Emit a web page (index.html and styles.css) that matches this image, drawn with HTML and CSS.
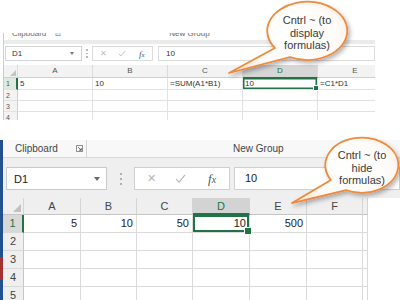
FILE: index.html
```html
<!DOCTYPE html>
<html>
<head>
<meta charset="utf-8">
<link rel="stylesheet" href="styles.css">
</head>
<body>
<div class="page">
  <section class="shot s1">
    <div class="ribbon">
      <span class="glabel clip">Clipboard</span><span class="launch">⊡</span>
      <span class="glabel newg">New Group</span>
    </div>
    <div class="band"></div>
    <div class="fbar">
      <div class="namebox"><span>D1</span><span class="arrow"></span></div>
      <div class="dots"><i></i><i></i><i></i></div>
      <div class="fbtns">
        <span class="xbtn">✕</span>
        <svg class="chk" viewBox="0 0 10 8"><polyline points="1,4.5 3.8,7 9,1" fill="none" stroke="#b5b5b5" stroke-width="1"/></svg>
        <span class="fx">f<small>x</small></span>
      </div>
      <div class="finput">10</div>
    </div>
    <div class="sheet">
      <div class="hd corner"><span class="tri"></span></div>
      <div class="hd">A</div><div class="hd">B</div><div class="hd">C</div><div class="hd sel">D</div><div class="hd">E</div>
      <div class="rh selr">1</div><div class="c">5</div><div class="c">10</div><div class="c">=SUM(A1*B1)</div><div class="c active">10</div><div class="c">=C1*D1</div>
      <div class="rh">2</div><div class="c"></div><div class="c"></div><div class="c"></div><div class="c"></div><div class="c"></div>
      <div class="rh">3</div><div class="c"></div><div class="c"></div><div class="c"></div><div class="c"></div><div class="c"></div>
      <div class="rh">4</div><div class="c"></div><div class="c"></div><div class="c"></div><div class="c"></div><div class="c"></div>
    </div>
  </section>

  <section class="shot s2">
    <div class="edge"></div>
    <div class="main">
      <div class="ribbon">
        <div class="grp gclip"><span class="glabel">Clipboard</span><span class="launch">
          <svg viewBox="0 0 8 8"><path d="M0.5 0.5H7.5V7.5H0.5Z" fill="none" stroke="#777" stroke-width="1"/><path d="M2.5 2.5L6 6M6 3.5V6H3.5" fill="none" stroke="#555" stroke-width="1"/></svg></span></div>
        <div class="grp gnew"><span class="glabel">New Group</span></div>
      </div>
      <div class="fbar">
        <div class="namebox"><span>D1</span><span class="arrow"></span></div>
        <div class="dots"><i></i><i></i><i></i></div>
        <div class="fbtns">
          <span class="xbtn">✕</span>
          <svg class="chk" viewBox="0 0 12 10"><polyline points="1,5.5 4.5,9 11,1" fill="none" stroke="#b5b5b5" stroke-width="1.2"/></svg>
          <span class="fx">f<small>x</small></span>
        </div>
        <div class="finput">10</div>
      </div>
      <div class="sheet">
        <div class="hd corner"><span class="tri"></span></div>
        <div class="hd">A</div><div class="hd">B</div><div class="hd">C</div><div class="hd sel">D</div><div class="hd">E</div><div class="hd">F</div><div class="hd"></div>
        <div class="rh selr">1</div><div class="c">5</div><div class="c">10</div><div class="c">50</div><div class="c active">10</div><div class="c">500</div><div class="c"></div><div class="c"></div>
        <div class="rh">2</div><div class="c"></div><div class="c"></div><div class="c"></div><div class="c"></div><div class="c"></div><div class="c"></div><div class="c"></div>
        <div class="rh">3</div><div class="c"></div><div class="c"></div><div class="c"></div><div class="c"></div><div class="c"></div><div class="c"></div><div class="c"></div>
        <div class="rh">4</div><div class="c"></div><div class="c"></div><div class="c"></div><div class="c"></div><div class="c"></div><div class="c"></div><div class="c"></div>
        <div class="rh">5</div><div class="c"></div><div class="c"></div><div class="c"></div><div class="c"></div><div class="c"></div><div class="c"></div><div class="c"></div>
      </div>
    </div>
  </section>

  <svg class="bubbles" viewBox="0 0 400 300" width="400" height="300">
    <defs>
      <radialGradient id="bg" cx="50%" cy="45%" r="60%">
        <stop offset="0" stop-color="#ffffff"/>
        <stop offset="0.7" stop-color="#fefbf8"/>
        <stop offset="1" stop-color="#fbe9d9"/>
      </radialGradient>
      <filter id="sh" x="-20%" y="-20%" width="150%" height="150%">
        <feDropShadow dx="2" dy="2.5" stdDeviation="2" flood-color="#000" flood-opacity="0.3"/>
      </filter>
    </defs>
    <path d="M275 48 L229 73 L290 57 A40 29 0 1 0 275 48 Z" fill="url(#bg)" stroke="#ee8a3c" stroke-width="1.8" stroke-linejoin="round" filter="url(#sh)"/>
    <path d="M331 180 L292 203 L346 190 A36.5 27.5 0 1 0 331 180 Z" fill="url(#bg)" stroke="#ee8a3c" stroke-width="1.8" stroke-linejoin="round" filter="url(#sh)"/>
  </svg>
  <div class="btext bt1">Cntrl ~ (to<br>display<br>formulas)</div>
  <div class="btext bt2">Cntrl ~ (to<br>hide<br>formulas)</div>
</div>
</body>
</html>
```

FILE: styles.css
```css
* { box-sizing: border-box; margin: 0; padding: 0; }
html, body { width: 400px; height: 300px; overflow: hidden; background: #fff; }
body { font-family: "Liberation Sans", Arial, sans-serif; color: #222; }
.page { position: relative; width: 400px; height: 300px; padding-top: 33px; }

/* ---------- top (small) screenshot ---------- */
.s1 { width: 372px; height: 87px; overflow: hidden; margin-left: 3px; border-left: 1px solid #bcd9c0; }
.s1 .ribbon { height: 7px; overflow: hidden; display: flex; font-size: 8px; color: #666; line-height: 8px; }
.s1 .ribbon > span { margin-top: -3px; }
.s1 .clip { margin-left: 8px; }
.s1 .launch { margin-left: 9px; font-size: 7px; }
.s1 .newg { margin-left: 108px; }
.s1 .band { height: 4px; background: #ebebeb; }
.s1 .fbar { height: 21px; display: flex; align-items: flex-start; padding-top: 2px; }
.s1 .namebox { width: 77px; height: 15px; margin-left: 1px; border: 1px solid #d4d4d4; display: flex; align-items: center; justify-content: space-between; padding: 0 7px 0 6px; font-size: 8px; color: #333; }
.s1 .arrow { width: 0; height: 0; border-left: 2.5px solid transparent; border-right: 2.5px solid transparent; border-top: 3px solid #777; }
.s1 .dots { width: 10px; height: 15px; display: flex; flex-direction: column; align-items: center; justify-content: center; gap: 2px; }
.dots i { display: block; width: 1px; height: 1px; background: #b8b8b8; }
.s1 .dots i { width: 1.5px; height: 1.5px; }
.s1 .fbtns { width: 61px; height: 15px; border: 1px solid #dcdcdc; display: flex; align-items: center; padding-left: 7px; }
.s1 .xbtn { font-size: 8px; color: #bdbdbd; width: 18px; }
.s1 .chk { width: 8px; height: 7px; }
.s1 .fx { margin-left: 13px; font-family: "Liberation Serif", serif; font-style: italic; font-size: 9px; color: #555; }
.s1 .fx small { font-size: 7px; }
.s1 .finput { margin-left: 5px; flex: 1; height: 15px; border: 1px solid #dcdcdc; font-size: 8px; padding-left: 7px; line-height: 13px; color: #333; }

.s1 .sheet { display: grid; grid-template-columns: 14px 75px 75px 75px 75px 75px; grid-template-rows: 13px 12px 11px 11px 11px; font-size: 8px; }
.s1 .hd { background: #f3f3f3; border-right: 1px solid #dadada; border-bottom: 1px solid #cfcfcf; text-align: center; line-height: 12px; color: #555; }
.s1 .hd.sel { background: #d6d6d6; color: #217346; border-bottom: 1px solid #217346; }
.s1 .corner { position: relative; }
.s1 .tri { position: absolute; right: 1px; bottom: 1px; width: 0; height: 0; border-left: 6px solid transparent; border-bottom: 6px solid #c4c4c4; }
.s1 .rh { background: #f3f3f3; border-right: 1px solid #cfcfcf; border-bottom: 1px solid #e2e2e2; padding-left: 2px; font-size: 7px; line-height: 11px; color: #555; }
.s1 .rh.selr { background: #dfe9df; color: #217346; border-right: 2px solid #217346; }
.s1 .c { border-right: 1px solid #e2e2e2; border-bottom: 1px solid #e2e2e2; padding-left: 2px; line-height: 11px; color: #333; white-space: nowrap; }
.s1 .c.active { position: relative; box-shadow: inset 0 0 0 1.5px #217346; }
.s1 .c.active::after { content: ""; position: absolute; right: -2px; bottom: -2px; width: 4px; height: 4px; background: #217346; border: 1px solid #fff; }

/* ---------- bottom (large) screenshot ---------- */
.s2 { margin-top: 20px; height: 160px; display: flex; }
.s2 .edge { width: 3px; background: linear-gradient(#23508f 0, #23508f 117px, #a33232 117px, #a33232 140px, #23508f 140px); }
.s2 .main { flex: 1; overflow: hidden; }
.s2 .ribbon { height: 18px; background: #f8f8f8; border-bottom: 1px solid #d9d9d9; display: flex; }
.s2 .grp { display: flex; align-items: center; font-size: 10px; color: #444; }
.s2 .gclip { width: 84px; padding-left: 12px; border-right: 1px solid #d4d4d4; }
.s2 .launch { margin-left: 18px; width: 7px; height: 7px; display: flex; }
.s2 .launch svg { width: 7px; height: 7px; }
.s2 .gnew { padding-left: 146px; }
.s2 .fbar { height: 40px; background: #efefef; display: flex; align-items: flex-start; padding-top: 9px; }
.s2 .namebox { width: 101px; height: 23px; margin-left: 3px; background: #fff; border: 1px solid #c9c9c9; display: flex; align-items: center; justify-content: space-between; padding: 0 6px 0 7px; font-size: 11px; color: #222; }
.s2 .arrow { width: 0; height: 0; border-left: 3.5px solid transparent; border-right: 3.5px solid transparent; border-top: 4px solid #666; }
.s2 .dots { width: 27px; height: 23px; display: flex; flex-direction: column; align-items: center; justify-content: center; gap: 3px; }
.s2 .dots i { width: 2px; height: 2px; background: #b0b0b0; }
.s2 .fbtns { width: 96px; height: 23px; background: #fff; border: 1px solid #cfcfcf; display: flex; align-items: center; padding-left: 12px; }
.s2 .xbtn { font-size: 11px; color: #b5b5b5; width: 28px; }
.s2 .chk { width: 11px; height: 9px; }
.s2 .fx { margin-left: 22px; font-family: "Liberation Serif", serif; font-style: italic; font-size: 13px; color: #555; }
.s2 .fx small { font-size: 10px; }
.s2 .finput { margin-left: 4px; flex: 1; height: 23px; background: #fff; border: 1px solid #cfcfcf; font-size: 11px; padding-left: 10px; line-height: 21px; color: #222; }

.s2 .sheet { width: 365px; display: grid; grid-template-columns: 21px 57px 56px 56px 57px 57px 56px 5px; grid-template-rows: 17px repeat(5, 18px); font-size: 11px; }
.s2 .hd { background: #efefef; border-right: 1px solid #d4d4d4; border-bottom: 1px solid #c6c6c6; text-align: center; line-height: 16px; color: #444; }
.s2 .hd.sel { background: #d3d3d3; color: #217346; border-bottom: 2px solid #217346; }
.s2 .corner { position: relative; }
.s2 .tri { position: absolute; right: 2px; bottom: 2px; width: 0; height: 0; border-left: 8px solid transparent; border-bottom: 8px solid #c0c0c0; }
.s2 .rh { background: #efefef; border-right: 1px solid #c6c6c6; border-bottom: 1px solid #d9d9d9; text-align: center; line-height: 17px; color: #444; font-size: 11px; }
.s2 .rh.selr { background: #d8d8d8; color: #217346; border-right: 2px solid #217346; }
.s2 .c { border-right: 1px solid #dadada; border-bottom: 1px solid #dadada; text-align: right; padding-right: 3px; line-height: 17px; color: #222; }
.s2 .c.active { position: relative; box-shadow: inset 0 0 0 2px #217346; }
.s2 .c.active::after { content: ""; position: absolute; right: -3px; bottom: -3px; width: 6px; height: 6px; background: #217346; border: 1px solid #fff; }

/* ---------- callouts ---------- */
.bubbles { position: absolute; left: 0; top: 0; pointer-events: none; }
.btext { position: absolute; font-family: "Liberation Sans", Arial, sans-serif; font-size: 11px; line-height: 12.5px; color: #3a3a3a; text-align: center; width: 80px; }
.bt1 { left: 267px; top: 14px; }
.bt2 { left: 322px; top: 149px; }
```
